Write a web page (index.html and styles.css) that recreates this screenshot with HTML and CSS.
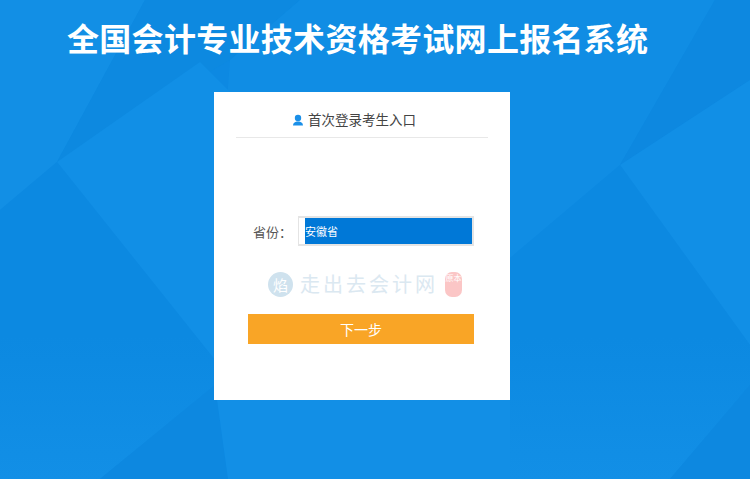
FILE: index.html
```html
<!DOCTYPE html>
<html lang="zh-CN">
<head>
  <meta charset="UTF-8" />
  <title>全国会计专业技术资格考试网上报名系统</title>
  <link rel="stylesheet" href="styles.css">
</head>
<body>
  <svg class="bg-poly" viewBox="0 0 750 479" preserveAspectRatio="none" aria-hidden="true">
    <defs>
      <linearGradient id="fade" x1="0" y1="0" x2="0" y2="1">
        <stop offset="0.55" stop-color="#0c89e1"/>
        <stop offset="1" stop-color="#128fe6"/>
      </linearGradient>
    </defs>
    <polygon points="0,0 145,0 57,162 0,210" fill="#128fe5"/>
    <polygon points="145,0 300,0 230,60 57,162" fill="#0d89e0"/>
    <polygon points="300,0 715,0 620,165 510,258 215,258 230,60" fill="#108de4"/>
    <polygon points="57,162 200,62 230,92 215,360" fill="#118fe6"/>
    <polygon points="0,210 57,162 215,360 215,385 100,479 0,479" fill="url(#fade)"/>
    <polygon points="100,479 215,385 228,479" fill="#0d88e0"/>
    <polygon points="215,385 510,385 530,479 228,479" fill="#128fe6"/>
    <polygon points="715,0 750,0 750,80 620,165" fill="#0d88e0"/>
    <polygon points="620,165 750,80 750,345" fill="#118fe6"/>
    <polygon points="510,258 620,165 750,345 750,385 670,479 510,479" fill="url(#fade)"/>
    <polygon points="670,479 750,385 750,479" fill="#0d88e0"/>
  </svg>

  <h1 class="site-title">全国会计专业技术资格考试网上报名系统</h1>

  <main class="login-card">
    <h2 class="card-head">
      <svg class="user-icon" viewBox="0 0 12 12" aria-hidden="true">
        <circle cx="6" cy="4" r="3.2" fill="#1a8fe8"/>
        <path d="M1 11.5c0-2.6 2-3.7 3.6-4h2.8c1.6.3 3.6 1.4 3.6 4z" fill="#1a8fe8"/>
      </svg>
      首次登录考生入口
    </h2>

    <div class="form-row">
      <label class="form-label">省份：</label>
      <div class="select-box"><span class="select-value">安徽省</span></div>
    </div>

    <div class="watermark">
      <span class="wm-badge">焰</span>
      <span class="wm-text">走出去会计网</span>
      <span class="wm-seal">原本</span>
    </div>

    <button class="next-btn" type="button">下一步</button>
  </main>
</body>
</html>
```

FILE: styles.css
```css
* {
  margin: 0;
  padding: 0;
  box-sizing: border-box;
}
body {
  position: relative;
  height: 479px;
  overflow: hidden;
  background: #0d89e2;
  font-family: "Noto Sans CJK SC", "Liberation Sans", sans-serif;
}
.bg-poly {
  position: absolute;
  left: 0;
  top: 0;
  width: 100%;
  height: 100%;
  z-index: 0;
}
.site-title {
  position: relative;
  height: 92px;
  padding: 15px 0 0 67px;
  font-size: 32px;
  letter-spacing: 0.3px;
  line-height: 44px;
  font-weight: 700;
  color: #fff;
  white-space: nowrap;
}
.login-card {
  position: relative;
  width: 296px;
  height: 308px;
  margin-left: 214px;
  padding: 0 22px;
  background: #fff;
}
.card-head {
  display: flex;
  align-items: center;
  justify-content: center;
  gap: 4px;
  height: 46px;
  padding: 8px 16px 0 0;
  border-bottom: 1px solid #e8e8e8;
  font-size: 13.5px;
  font-weight: 400;
  color: #444;
}
.user-icon {
  width: 12px;
  height: 12px;
  margin-top: 2px;
}
.form-row {
  display: flex;
  align-items: center;
  margin-top: 78px;
  padding-left: 17px;
}
.form-label {
  width: 45px;
  font-size: 13px;
  color: #555;
}
.select-box {
  width: 176px;
  height: 30px;
  padding-left: 6px;
  border: 2px solid #e4e4e4;
  border-left-width: 1px;
  background: #fff;
}
.select-value {
  display: block;
  height: 100%;
  background: #0078d7;
  color: #fff;
  font-size: 11px;
  line-height: 26px;
}
.watermark {
  display: flex;
  align-items: center;
  height: 28px;
  margin-top: 24px;
  padding-left: 32px;
}
.wm-badge {
  width: 25px;
  height: 25px;
  border-radius: 50%;
  background: #cfe2ee;
  color: #fff;
  font-size: 15px;
  line-height: 25px;
  text-align: center;
}
.wm-text {
  width: 145px;
  margin-left: 7px;
  font-size: 20px;
  letter-spacing: 3px;
  line-height: 28px;
  color: #dbe8f1;
  white-space: nowrap;
}
.wm-seal {
  width: 17px;
  height: 25px;
  border-radius: 7px;
  background: #fbc6c6;
  color: #fff;
  font-size: 8px;
  line-height: 12px;
  text-align: center;
}
.next-btn {
  display: block;
  width: 226px;
  height: 30px;
  margin: 16px 0 0 12px;
  border: none;
  background: #f9a526;
  color: #fff;
  font-family: inherit;
  font-size: 14px;
}
```
